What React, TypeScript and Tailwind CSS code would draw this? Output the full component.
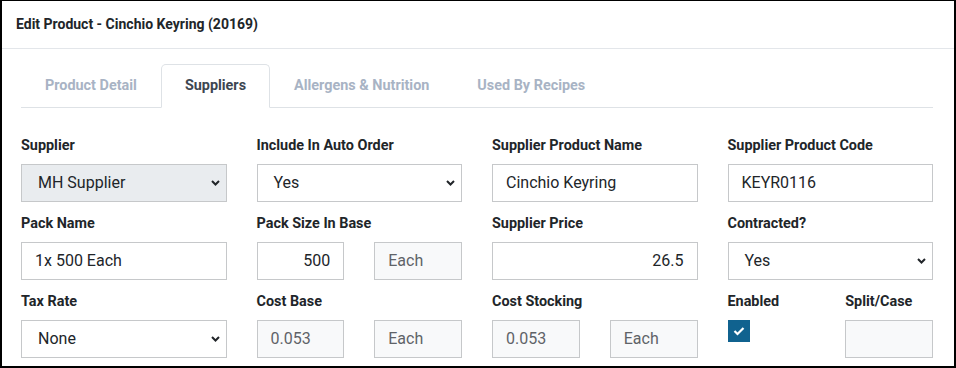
import React from "react";

const labelCls = "block text-[14.4px] leading-[17px] font-bold text-[#212529] mb-[10px] whitespace-nowrap";
const boxCls = "h-[38px] w-full border border-[#c6c8ca] px-[13px] text-[16px] flex items-center";

const Chevron = () => (
  <svg width="9" height="6" viewBox="0 0 9 6" className="absolute right-[6px] top-1/2 -translate-y-1/2">
    <path d="M1 1 L4.5 4.5 L8 1" fill="none" stroke="#212529" strokeWidth="2" />
  </svg>
);

const Select = ({ value, disabled }: { value: string; disabled?: boolean }) => (
  <div
    className={`relative h-[38px] w-full border border-[#c6c8ca] pl-[16px] text-[16px] flex items-center text-[#212529] ${
      disabled ? "bg-[#e9ecef]" : "bg-white"
    }`}
  >
    {value}
    <Chevron />
  </div>
);

const Input = ({ value, right, disabled }: { value: string; right?: boolean; disabled?: boolean }) => (
  <div
    className={`${boxCls} ${right ? "justify-end" : ""} ${
      disabled ? "bg-[#f8f9fa] text-[#5f6368]" : "bg-white text-[#212529]"
    }`}
  >
    {value}
  </div>
);

const Field = ({ label, children }: { label: string; children: React.ReactNode }) => (
  <div>
    <div className={labelCls}>{label}</div>
    {children}
  </div>
);

const tabs = ["Product Detail", "Suppliers", "Allergens & Nutrition", "Used By Recipes"];

export default function App() {
  return (
    <div className="w-[956px] h-[368px] overflow-hidden bg-white border-t border-l-2 border-r-2 border-b-2 border-black font-['Roboto','Liberation_Sans',sans-serif]">
      <div className="h-[48px] border-b border-[#e3e6ea] pl-[14px] flex items-center">
        <span className="text-[14px] font-bold text-[#212529]">Edit Product - Cinchio Keyring (20169)</span>
      </div>

      <div className="pl-[19px] pr-[21px]">
        <ul className="mt-[15px] flex border-b border-[#dee2e6]">
          {tabs.map((t) => {
            const active = t === "Suppliers";
            return (
              <li
                key={t}
                className={`-mb-px h-[44px] px-[23px] flex items-center text-[14.4px] font-bold rounded-t-[5px] border ${
                  active
                    ? "border-[#dee2e6] border-b-white bg-white text-[#3d4651]"
                    : "border-transparent text-[#a8b3c4]"
                }`}
              >
                {t}
              </li>
            );
          })}
        </ul>

        <div className="pt-[29px] grid grid-cols-4 gap-x-[30px] gap-y-[13px]">
          <Field label="Supplier">
            <Select value="MH Supplier" disabled />
          </Field>
          <Field label="Include In Auto Order">
            <Select value="Yes" />
          </Field>
          <Field label="Supplier Product Name">
            <Input value="Cinchio Keyring" />
          </Field>
          <Field label="Supplier Product Code">
            <Input value="KEYR0116" />
          </Field>

          <Field label="Pack Name">
            <Input value="1x 500 Each" />
          </Field>
          <div className="grid grid-cols-2 gap-x-[30px]">
            <Field label="Pack Size In Base">
              <Input value="500" right />
            </Field>
            <div className="pt-[27px]">
              <Input value="Each" disabled />
            </div>
          </div>
          <Field label="Supplier Price">
            <Input value="26.5" right />
          </Field>
          <Field label="Contracted?">
            <Select value="Yes" />
          </Field>

          <Field label="Tax Rate">
            <Select value="None" />
          </Field>
          <div className="grid grid-cols-2 gap-x-[30px]">
            <Field label="Cost Base">
              <Input value="0.053" disabled />
            </Field>
            <div className="pt-[27px]">
              <Input value="Each" disabled />
            </div>
          </div>
          <div className="grid grid-cols-2 gap-x-[30px]">
            <Field label="Cost Stocking">
              <Input value="0.053" disabled />
            </Field>
            <div className="pt-[27px]">
              <Input value="Each" disabled />
            </div>
          </div>
          <div className="grid grid-cols-2 gap-x-[30px]">
            <Field label="Enabled">
              <div className="w-[22px] h-[22px] bg-[#10628f] flex items-center justify-center">
                <svg width="12" height="10" viewBox="0 0 12 10">
                  <path d="M1.5 5 L4.5 8 L10.5 2" fill="none" stroke="white" strokeWidth="2.2" />
                </svg>
              </div>
            </Field>
            <Field label="Split/Case">
              <Input value="" disabled />
            </Field>
          </div>
        </div>
      </div>
    </div>
  );
}
